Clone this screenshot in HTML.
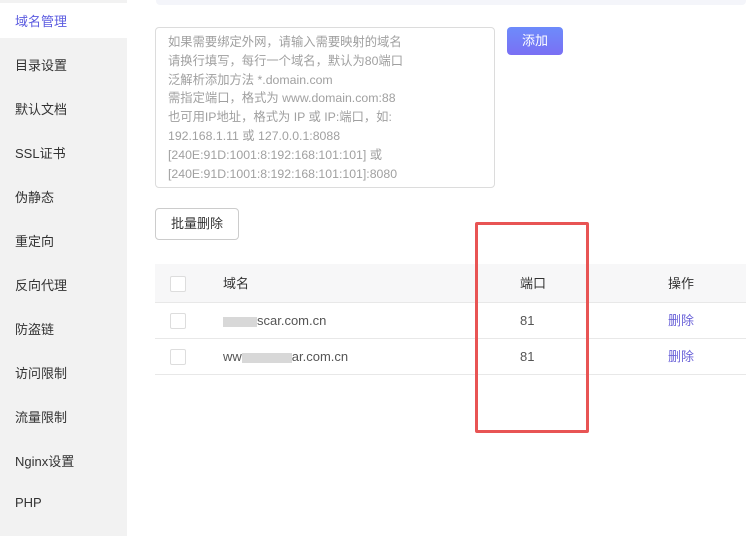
<!DOCTYPE html>
<html><head><meta charset="utf-8"><style>
*{margin:0;padding:0;box-sizing:border-box}
body{width:756px;height:536px;overflow:hidden;background:#fff;font-family:"Liberation Sans","Noto Sans CJK SC",sans-serif;font-size:13px;color:#333;position:relative}
.side{position:absolute;left:0;top:0;width:127px;height:536px;background:#f2f2f2}
.side .it{position:absolute;left:15px;font-size:13px;color:#333}
.act{position:absolute;left:0;top:3px;width:127px;height:35px;background:#fff}
.top{position:absolute;left:156px;top:0;width:590px;height:5px;background:#f4f5fa;border-radius:0 0 4px 4px}
.ta{position:absolute;left:155px;top:27px;width:340px;height:161px;border:1px solid #dcdcdc;border-radius:4px;padding:5px 0 0 12px;color:#a0a0a0;font-size:12.3px;line-height:18.8px;white-space:nowrap;overflow:hidden}
.add{position:absolute;left:507px;top:27px;width:56px;height:28px;border-radius:4px;background:linear-gradient(#6d8bfb,#7a70f4);color:#fff;font-size:13px;text-align:center;line-height:28px}
.bd{position:absolute;left:155px;top:208px;width:84px;height:32px;border:1px solid #ccc;border-radius:4px;text-align:center;line-height:30px;font-size:13px;color:#333}
.th{position:absolute;left:155px;top:264px;width:591px;height:39px;background:#f7f7f8;border-bottom:1px solid #e8e8e8}
.tr{position:absolute;left:155px;width:591px;height:36px;border-bottom:1px solid #e8e8e8}
.cb{position:absolute;left:15px;width:16px;height:16px;border:1px solid #ddd;border-radius:2px;background:#fff}
.c{position:absolute;font-size:13px;line-height:16px;height:16px}
.blur{display:inline-block;height:10px;background:#d8d8d8;vertical-align:middle}
.red{position:absolute;left:475px;top:222px;width:114px;height:211px;border:3px solid #e85454;border-radius:2px}
</style></head><body>
<div class="side">
<div class="act"></div>
<div class="it" style="top:11px;color:#5b5be0">域名管理</div>
<div class="it" style="top:55px">目录设置</div>
<div class="it" style="top:99px">默认文档</div>
<div class="it" style="top:143px">SSL证书</div>
<div class="it" style="top:187px">伪静态</div>
<div class="it" style="top:231px">重定向</div>
<div class="it" style="top:275px">反向代理</div>
<div class="it" style="top:319px">防盗链</div>
<div class="it" style="top:363px">访问限制</div>
<div class="it" style="top:407px">流量限制</div>
<div class="it" style="top:451px">Nginx设置</div>
<div class="it" style="top:495px">PHP</div>
</div>
<div class="top"></div>
<div class="ta">如果需要绑定外网，请输入需要映射的域名<br>请换行填写，每行一个域名，默认为80端口<br>泛解析添加方法 *.domain.com<br>需指定端口，格式为 www.domain.com:88<br>也可用IP地址，格式为 IP 或 IP:端口，如:<br>192.168.1.11 或 127.0.0.1:8088<br>[240E:91D:1001:8:192:168:101:101] 或<br>[240E:91D:1001:8:192:168:101:101]:8080</div>
<div class="add">添加</div>
<div class="bd">批量删除</div>
<div class="th"><div class="cb" style="top:12px"></div><div class="c" style="left:68px;top:12px">域名</div><div class="c" style="left:365px;top:12px">端口</div><div class="c" style="left:513px;top:12px">操作</div></div>
<div class="tr" style="top:303px"><div class="cb" style="top:10px"></div><div class="c" style="left:68px;top:10px;color:#555"><span class="blur" style="width:34px"></span>scar.com.cn</div><div class="c" style="left:365px;top:10px;color:#555">81</div><div class="c" style="left:513px;top:10px;color:#6a62d8">删除</div></div>
<div class="tr" style="top:339px"><div class="cb" style="top:10px"></div><div class="c" style="left:68px;top:10px;color:#555">ww<span class="blur" style="width:50px"></span>ar.com.cn</div><div class="c" style="left:365px;top:10px;color:#555">81</div><div class="c" style="left:513px;top:10px;color:#6a62d8">删除</div></div>
<div class="red"></div>
</body></html>
